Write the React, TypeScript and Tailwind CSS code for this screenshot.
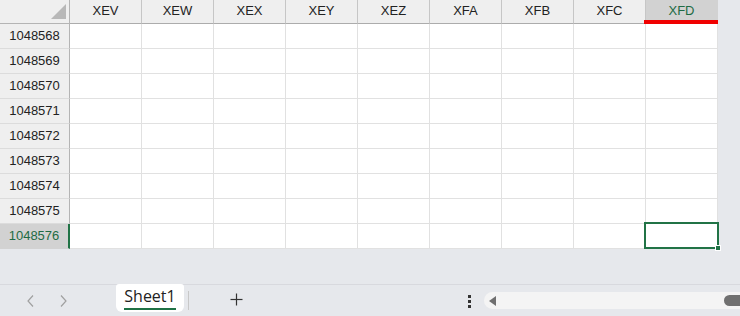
import React from "react";

const cols = ["XEV", "XEW", "XEX", "XEY", "XEZ", "XFA", "XFB", "XFC", "XFD"];
const rows = [1048568, 1048569, 1048570, 1048571, 1048572, 1048573, 1048574, 1048575, 1048576];

export default function App() {
  const font = { fontFamily: '"Liberation Sans", Arial, sans-serif' };
  return (
    <div className="w-[740px] h-[316px] bg-[#e6e8ec] flex flex-col overflow-hidden" style={font}>
      <div className="flex">
        <div className="grid grid-cols-[70px_repeat(9,72px)] bg-white">
          {/* corner */}
          <div className="h-[24px] bg-[#efefef] border-r border-b border-[#b4b4b4] relative flex items-end justify-end pr-[3px] pb-[4px]">
            <svg width="15" height="15" viewBox="0 0 15 15">
              <polygon points="15,0 15,15 0,15" fill="#b8b8b8" />
            </svg>
          </div>
          {cols.map((c, i) => {
            const last = i === cols.length - 1;
            return (
              <div
                key={c}
                className={`h-[24px] border-r border-b border-b-[#acacac] relative flex items-start justify-center pt-[4px] text-[13px] leading-[14px] ${
                  last ? "bg-[#d2d2d2] text-[#1e6b44] border-r-[#d2d2d2]" : "bg-[#efefef] text-[#222] border-r-[#c6c6c6]"
                }`}
              >
                {c}
                {last && <div className="absolute left-[-2px] right-[-1px] bottom-[-1px] h-[4px] bg-[#f00000]" />}
              </div>
            );
          })}
          {rows.map((r, ri) => {
            const lastRow = ri === rows.length - 1;
            return (
              <React.Fragment key={r}>
                <div
                  className={`h-[25px] border-b flex items-center justify-center text-[13px] ${
                    lastRow
                      ? "bg-[#d2d2d2] text-[#1e6b44] border-r-2 border-r-[#217346] border-b-[#d2d2d2]"
                      : "bg-[#efefef] text-[#222] border-r border-r-[#b4b4b4] border-b-[#dcdcdc]"
                  }`}
                >
                  {r}
                </div>
                {cols.map((c, ci) => {
                  const sel = lastRow && ci === cols.length - 1;
                  return (
                    <div key={c} className="h-[25px] border-r border-b border-[#e1e1e1] relative">
                      {sel && (
                        <div className="absolute left-[-2px] top-[-2px] w-[75px] h-[27px] border-2 border-[#217346]">
                          <div className="absolute right-[-4px] bottom-[-4px] w-[6px] h-[6px] bg-[#217346] border border-white" />
                        </div>
                      )}
                    </div>
                  );
                })}
              </React.Fragment>
            );
          })}
        </div>
      </div>
      <div className="flex-1" />
      <div className="h-[32px] border-t border-[#d8d9de] flex items-start relative">
        <div className="w-[116px] h-full flex items-center pl-[26px] gap-[24px] text-[#9a9a9a]">
          <svg width="9" height="14" viewBox="0 0 9 14">
            <polyline points="7,1.5 2,7 7,12.5" fill="none" stroke="#a0a0a0" strokeWidth="1.2" />
          </svg>
          <svg width="9" height="14" viewBox="0 0 9 14">
            <polyline points="2,1.5 7,7 2,12.5" fill="none" stroke="#a0a0a0" strokeWidth="1.2" />
          </svg>
        </div>
        <div className="w-[68px] h-[28px] mt-[-1px] bg-white rounded-b-[6px] rounded-t-[3px] flex flex-col items-center pt-[4px]">
          <span className="text-[16px] leading-[17px] text-[#222]" style={{ fontFamily: '"Open Sans", "Liberation Sans", sans-serif' }}>
            Sheet1
          </span>
          <div className="w-[52px] h-[2px] bg-[#1e7145] mt-[3px]" />
        </div>
        <div className="w-px h-[19px] bg-[#c8c8c8] mt-[6px] ml-[4px]" />
        <div className="ml-[41px] mt-[8px]">
          <svg width="13" height="13" viewBox="0 0 13 13">
            <line x1="6.5" y1="0.5" x2="6.5" y2="12.5" stroke="#333" strokeWidth="1.2" />
            <line x1="0.5" y1="6.5" x2="12.5" y2="6.5" stroke="#333" strokeWidth="1.2" />
          </svg>
        </div>
        <div className="ml-[225px] mt-[10px] flex flex-col gap-[2px]">
          <div className="w-[3px] h-[3px] bg-[#333]" />
          <div className="w-[3px] h-[3px] bg-[#333]" />
          <div className="w-[3px] h-[3px] bg-[#333]" />
        </div>
        <div className="ml-[13px] mt-[7px] flex-1 h-[17px] bg-[#f4f4f4] rounded-l-full flex items-center pl-[5px] relative">
          <svg width="7" height="10" viewBox="0 0 7 10">
            <polygon points="7,0 7,10 0,5" fill="#6f6f6f" />
          </svg>
          <div className="absolute right-0 top-[3px] w-[16px] h-[11px] bg-[#707070] rounded-l-full" />
        </div>
      </div>
    </div>
  );
}
